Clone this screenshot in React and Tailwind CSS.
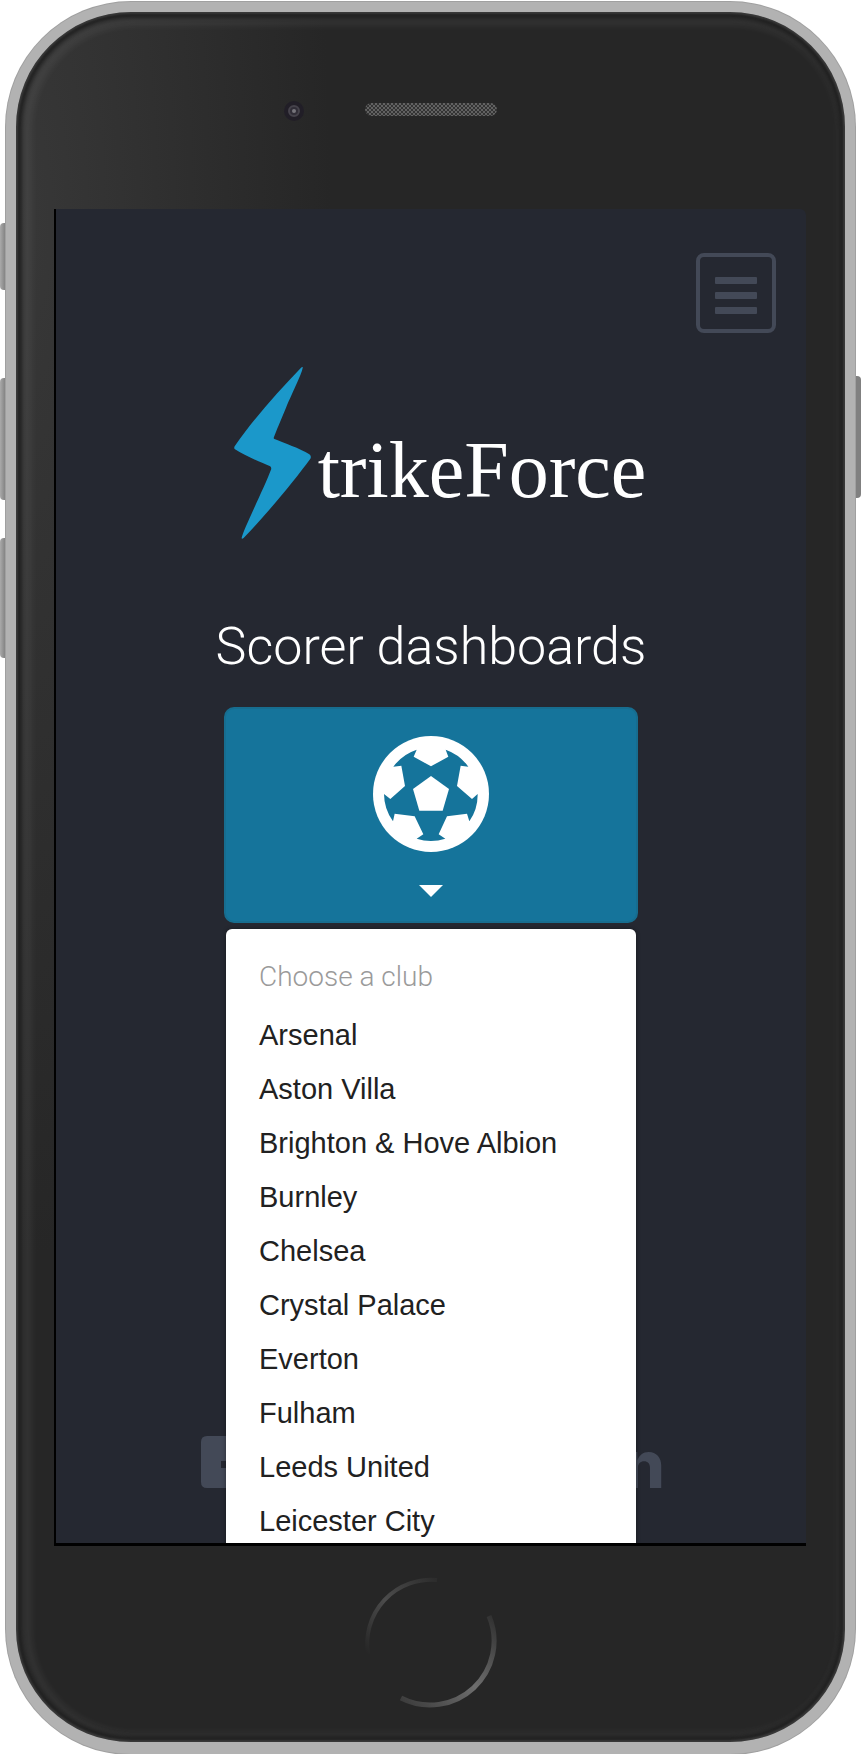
const clubs = [
  'Arsenal',
  'Aston Villa',
  'Brighton & Hove Albion',
  'Burnley',
  'Chelsea',
  'Crystal Palace',
  'Everton',
  'Fulham',
  'Leeds United',
  'Leicester City',
];

function Bolt() {
  return (
    <svg className="h-[172px] w-[77px] shrink-0" viewBox="99 80 232 518" aria-hidden="true">
      <path
        fill="#1b98ca"
        d="M306 80C307 92 278 150 256 202C240 240 226 274 219 292Q218 295 221 297C250 309 297 325 326 343Q334 349 328 358C284 418 204 516 128 595Q122 600 122 595C128 568 190 444 211 388Q212 382 208 379C180 367 130 347 102 328Q98 325 101 319C155 240 230 156 301 82Q305 79 306 80Z"
      />
    </svg>
  );
}

function Football() {
  return (
    <svg className="size-[116px]" viewBox="489 138 348 348" aria-hidden="true">
      <circle cx="663" cy="312" r="174" fill="#fff" />
      <path
        fill="#15749b"
        d="M620 179L611 200L663 229L715 200L707 179A141 141 0 0 1 775 230L752 227L741 288L786 327L803 312A141 141 0 0 1 778 394L771 371L711 379L686 433L706 446A141 141 0 0 1 620 446L640 433L614 379L554 371L549 394A141 141 0 0 1 522 312L541 327L585 288L574 227L550 230A141 141 0 0 1 620 179Z"
      />
      <path fill="#fff" d="M663 258L717 297L698 362H628L609 297Z" />
    </svg>
  );
}

function HomeRing() {
  return (
    <svg className="size-[136px]" viewBox="0 0 136 136" fill="none" aria-hidden="true">
      <defs>
        <linearGradient id="ringTop" x1="0" y1="1" x2="1" y2="0">
          <stop offset="0" stopColor="#262626" />
          <stop offset="0.5" stopColor="#4c4c4c" />
          <stop offset="1" stopColor="#2c2c2c" />
        </linearGradient>
        <linearGradient id="ringBottom" x1="1" y1="0" x2="0" y2="1">
          <stop offset="0" stopColor="#303030" />
          <stop offset="0.5" stopColor="#6e6e6e" />
          <stop offset="1" stopColor="#3a3a3a" />
        </linearGradient>
      </defs>
      <path d="M5 78A64 64 0 0 1 74 4" stroke="url(#ringTop)" strokeWidth="4" />
      <path d="M126 40A64 64 0 0 1 38 122" stroke="url(#ringBottom)" strokeWidth="5" />
    </svg>
  );
}

function Sensors() {
  return (
    <div className="grid h-[197px] grid-cols-[1fr_132px_1fr] pt-[91px]">
      <div className="flex h-4 items-center justify-end pr-[61px]">
        <span className="flex size-5 items-center justify-center rounded-full bg-[#211e27]">
          <span className="size-3 rounded-full border-2 border-[#45424b] bg-[#302d37] p-[2px]">
            <span className="block size-1 rounded-full bg-[#77757c]" />
          </span>
        </span>
      </div>
      <div className="h-[13px] rounded-full bg-[#3b3b3b] bg-[repeating-conic-gradient(#626262_0_25%,#343434_0_50%)] bg-[length:4px_4px]" />
    </div>
  );
}

export default function App() {
  return (
    <div className="relative bg-white px-[6px] pt-[2px] font-['Liberation_Sans',Arial,sans-serif]">
      <span className="absolute top-[223px] left-0 h-[67px] w-[6px] rounded-l-sm bg-linear-to-r from-[#aaa] to-[#7d7d7d]" />
      <span className="absolute top-[378px] left-0 h-[122px] w-[6px] rounded-l-sm bg-linear-to-r from-[#aaa] to-[#7d7d7d]" />
      <span className="absolute top-[538px] left-0 h-[120px] w-[6px] rounded-l-sm bg-linear-to-r from-[#aaa] to-[#7d7d7d]" />
      <span className="absolute top-[376px] right-0 h-[122px] w-[7px] rounded-r-sm bg-[#808080]" />

      <div className="relative rounded-[125px] border-[10px] border-b-[12px] border-[#b2b2b2] bg-[#262626] bg-[radial-gradient(ellipse_38%_60%_at_0%_12%,#383838,#262626)] shadow-[0_0_0_1px_#a0a0a0,inset_0_0_2px_2px_#3a3a3a,inset_0_0_4px_6px_#202020,inset_4px_2px_6px_12px_rgba(255,255,255,0.06)]">
        <Sensors />

        <main className="mr-[39px] ml-[38px] flex flex-col items-center overflow-hidden rounded-tr-md border-b-[3px] border-l-2 border-black bg-[#252831] pb-[55px]">
          <header className="flex w-full justify-end pt-11 pr-[30px]">
            <button
              type="button"
              aria-label="Menu"
              className="flex size-20 flex-col items-center justify-center gap-2 rounded-lg border-4 border-[#434957] pt-1"
            >
              <span className="h-[7px] w-[42px] rounded-[1px] bg-[#434957]" />
              <span className="h-[7px] w-[42px] rounded-[1px] bg-[#434957]" />
              <span className="h-[7px] w-[42px] rounded-[1px] bg-[#434957]" />
            </button>
          </header>

          <div className="mt-[34px] flex items-end gap-[7px] pl-[18px]">
            <Bolt />
            <span className="mb-[29px] font-['Liberation_Serif','Times_New_Roman',serif] text-[80px] leading-[80px] text-white">
              trikeForce
            </span>
          </div>

          <h1 className="mt-[78px] font-['Roboto',sans-serif] text-[52px] leading-[60px] font-light whitespace-nowrap text-white">
            Scorer dashboards
          </h1>

          <div className="relative z-10 mt-[30px] w-full max-w-[414px]">
            <button
              type="button"
              aria-label="Choose a club"
              aria-expanded="true"
              className="flex h-[216px] w-full flex-col items-center rounded-[10px] border-2 border-[#176d8f] bg-[#15749b] pt-[27px]"
            >
              <Football />
              <svg className="mt-[33px] h-3 w-6" viewBox="0 0 24 12" aria-hidden="true">
                <path fill="#fff" d="M0 0H24L12 12Z" />
              </svg>
            </button>

            <div className="absolute inset-x-[2px] top-full mt-[6px] rounded-md bg-white px-[33px] pt-[21px] pb-10 shadow-[0_0_4px_rgba(0,0,0,0.4)]">
              <p className="mb-1 font-['Roboto',sans-serif] text-[28px] leading-[54px] font-light text-[#9a9a9a]">
                Choose a club
              </p>
              <ul>
                {clubs.map((club) => (
                  <li key={club}>
                    <a href="#" className="block text-[29px] leading-[54px] whitespace-nowrap text-[#212121]">
                      {club}
                    </a>
                  </li>
                ))}
              </ul>
            </div>
          </div>

          <footer className="mt-[513px] flex h-[52px] w-full max-w-[468px] items-end justify-between pl-1">
            <svg className="size-[52px]" viewBox="0 0 52 52" aria-hidden="true">
              <path
                fill="#434957"
                fillRule="evenodd"
                d="M6 0H46Q52 0 52 6V46Q52 52 46 52H6Q0 52 0 46V6Q0 0 6 0ZM20 25V32H34V25Z"
              />
            </svg>
            <span className="-mb-[10px] font-['Inter',sans-serif] text-[66px] leading-[68px] font-extrabold text-[#434957]">
              n
            </span>
          </footer>
        </main>

        <div className="flex h-[196px] items-center justify-center">
          <button type="button" aria-label="Home" className="rounded-full">
            <HomeRing />
          </button>
        </div>
      </div>
    </div>
  );
}
